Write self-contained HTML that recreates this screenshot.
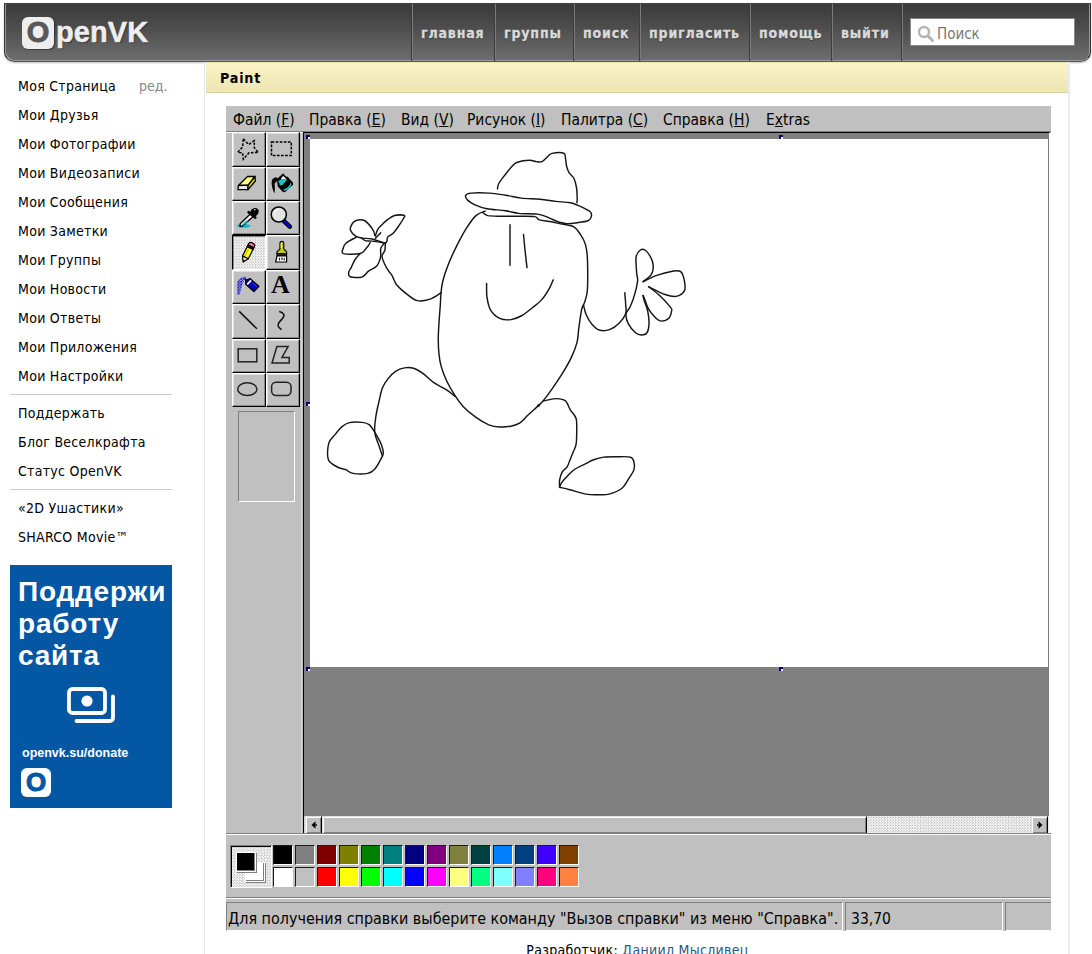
<!DOCTYPE html>
<html lang="ru"><head><meta charset="utf-8"><title>Paint</title>
<style>
*{box-sizing:border-box;margin:0;padding:0}
html,body{width:1092px;height:954px;overflow:hidden;background:#fff}
body{position:relative;font-family:"DejaVu Sans Condensed","Liberation Sans",sans-serif;font-size:14px;color:#000}
i{font-style:normal}
/* header */
#hdr{position:absolute;left:4px;top:3px;width:1087px;height:59px;border-radius:0 0 10px 10px;
 background:linear-gradient(#3a3a3a 0%,#4a4a4a 35%,#6e6e6e 100%);border:1px solid #333;border-top-color:#444;border-bottom-color:#585858;
 box-shadow:inset 1px -1px 0 #999, inset -1px 0 0 #999, 0 1px 2px rgba(0,0,0,.25)}
#logo{position:absolute;left:22px;top:17px;width:32px;height:32px;border-radius:6px;background:#eee;box-shadow:1px 1px 1px rgba(0,0,0,.4)}
#logo b{position:absolute;left:0;top:-1px;width:32px;text-align:center;font:bold 29px "Liberation Sans",sans-serif;color:#585858;-webkit-text-stroke:.9px #585858}
#logot{position:absolute;left:56px;top:16px;font:bold 29px "Liberation Sans",sans-serif;color:#eee;letter-spacing:.1px;-webkit-text-stroke:.5px #eee;text-shadow:1px 1px 1px rgba(0,0,0,.5)}
.nav{position:absolute;top:4px;height:57px;border-left:1px solid #3d3d3d;box-shadow:inset 1px 0 0 #7a7a7a;
 font:bold 14px "DejaVu Sans Condensed","Liberation Sans",sans-serif;color:#dadada;line-height:59px;-webkit-text-stroke:.3px #dadada;padding-left:9px;letter-spacing:.85px;white-space:nowrap;text-shadow:0 1px 1px rgba(0,0,0,.4)}
#search{position:absolute;left:910px;top:18px;width:165px;height:28px;background:#fff;border:1px solid #888}
#search span{position:absolute;left:26px;top:6px;font-size:15px;color:#777}
/* sidebar */
.sl{position:absolute;left:18px;font-size:14px;letter-spacing:.28px;white-space:nowrap;line-height:20px;color:#000}
.sep{position:absolute;left:10px;width:162px;height:1px;background:#ccc}
#ban{position:absolute;left:10px;top:565px;width:162px;height:243px;background:#0457a3;color:#fff}
/* content */
#cb{position:absolute;left:204px;top:62px;width:1px;height:892px;background:#dfe6ee}
#cbr{position:absolute;left:1068px;top:62px;width:2px;height:892px;background:#e6edf5}
#ybar{position:absolute;left:206px;top:62px;width:862px;height:31px;background:linear-gradient(#fbf3c4,#eee5b7);border-bottom:1px solid #dbd29f;border-top:1px solid #f0e6b4}
#ybar b{position:absolute;left:14px;top:7px;font:bold 14.2px "DejaVu Sans Condensed","Liberation Sans",sans-serif;letter-spacing:.8px}
#foot{position:absolute;left:206px;top:942px;width:863px;text-align:center;font-size:14px;letter-spacing:.3px;white-space:nowrap}
#foot a{color:#2b587a}
/* paint */
#pa{position:absolute;left:226px;top:106px;width:825px;height:825px;background:#c0c0c0;font-size:16.5px;overflow:hidden}
#pa>*{position:absolute}
.mi{top:4px;line-height:20px;white-space:nowrap;color:#000;transform:scaleX(.935);transform-origin:0 0}
.mi u{text-decoration:underline;text-underline-offset:1px}
.tb{background:#c0c0c0;border:1px solid;border-color:#fff #000 #000 #fff;box-shadow:inset -1px -1px 0 #888,inset 1px 1px 0 #dfdfdf}
.tb svg{position:absolute;left:-1px;top:-1px}
.tb.sel{border-color:#000 #fff #fff #000;box-shadow:inset 1px 1px 0 #888;background:#dfdfdf;
 background-image:repeating-conic-gradient(#fff 0 25%,#c0c0c0 0 50%);background-size:2.75px 2.75px}
.sw{position:absolute;width:20px;height:20px;border:1px solid;border-color:#1c1c1c #fff #fff #1c1c1c}
.h{position:absolute;width:4px;height:4px;background:#000080}
.h::after{content:"";position:absolute;left:2px;top:2px;width:2px;height:2px;background:#fff}
#sb{background-color:#dfdfdf;background-image:repeating-conic-gradient(#fff 0 25%,#c0c0c0 0 50%);background-size:2.75px 2.75px}
#sb>*{position:absolute;top:0;height:18px;background:#c0c0c0;border:1px solid;border-color:#dfdfdf #000 #000 #dfdfdf;box-shadow:inset 1px 1px 0 #fff,inset -1px -1px 0 #808080}
#cc{background-color:#dfdfdf;background-image:repeating-conic-gradient(#fff 0 25%,#c0c0c0 0 50%);background-size:2.75px 2.75px;border:1px solid;border-color:#808080 #fff #fff #808080;box-shadow:inset 1px 1px 0 #000}
#cc i{position:absolute;width:20px;height:20px;border:1px solid #fff;box-shadow:1px 1px 0 #808080,inset -1px -1px 0 #808080}
.st{top:796px;height:29px;line-height:26px;padding-top:3px;border:1px solid;border-color:#808080 #fff #fff #808080;white-space:nowrap;font-size:16.5px;padding-left:1px;overflow:hidden}
#bt{position:absolute;left:8px;top:11px;font:bold 28px/32px "Liberation Sans",sans-serif;letter-spacing:.8px;white-space:nowrap}
#bi{position:absolute;left:57px;top:122px}
#bu{position:absolute;left:12px;top:181px;font:bold 12.5px "Liberation Sans",sans-serif;white-space:nowrap}
#bl{position:absolute;left:11px;top:203px;width:30px;height:29px;border-radius:6px;background:#fff}
#bl b{position:absolute;left:0;top:-1px;width:30px;text-align:center;font:bold 26px "Liberation Sans",sans-serif;color:#0457a3;-webkit-text-stroke:1px #0457a3}
</style></head><body>
<div id="hdr"></div>
<div id="logo"><b>O</b></div><div id="logot">penVK</div>
<div class="nav" style="left:411px">главная</div>
<div class="nav" style="left:494px">группы</div>
<div class="nav" style="left:573px">поиск</div>
<div class="nav" style="left:639px">пригласить</div>
<div class="nav" style="left:749px">помощь</div>
<div class="nav" style="left:831px">выйти</div>
<div class="nav" style="left:901px"></div>
<div id="search"><svg width="18" height="18" viewBox="0 0 18 18" style="position:absolute;left:6px;top:6px"><circle cx="7" cy="7" r="5" fill="none" stroke="#b4b4b4" stroke-width="2.4"/><path d="M11 11L15.5 15.5" stroke="#b4b4b4" stroke-width="3" stroke-linecap="round"/></svg><span>Поиск</span></div>

<div class="sl" style="top:76px">Моя Страница</div><div class="sl" style="top:76px;left:139px;color:#888;letter-spacing:0">ред.</div>
<div class="sl" style="top:105px">Мои Друзья</div>
<div class="sl" style="top:134px">Мои Фотографии</div>
<div class="sl" style="top:163px">Мои Видеозаписи</div>
<div class="sl" style="top:192px">Мои Сообщения</div>
<div class="sl" style="top:221px">Мои Заметки</div>
<div class="sl" style="top:250px">Мои Группы</div>
<div class="sl" style="top:279px">Мои Новости</div>
<div class="sl" style="top:308px">Мои Ответы</div>
<div class="sl" style="top:337px">Мои Приложения</div>
<div class="sl" style="top:366px">Мои Настройки</div>
<div class="sep" style="top:394px"></div>
<div class="sl" style="top:403px">Поддержать</div>
<div class="sl" style="top:432px">Блог Веселкрафта</div>
<div class="sl" style="top:461px">Статус OpenVK</div>
<div class="sep" style="top:489px"></div>
<div class="sl" style="top:498px">«2D Ушастики»</div>
<div class="sl" style="top:527px">SHARCO Movie™</div>
<div id="ban">
<div id="bt">Поддержи<br>работу<br>сайта</div>
<svg id="bi" width="50" height="38" viewBox="0 0 50 38" fill="none" stroke="#fff" stroke-width="3.8"><rect x="2" y="2" width="36" height="24" rx="3.5"/><circle cx="20" cy="14" r="5.6" fill="#fff" stroke="none"/><path d="M46 9.5V30.5Q46 34 42.5 34H9.5" stroke-linecap="round"/></svg>
<div id="bu">openvk.su/donate</div>
<div id="bl"><b>O</b></div>
</div>

<div id="cb"></div><div id="cbr"></div>
<div id="ybar"><b>Paint</b></div>
<div id="foot">Разработчик: <a>Даниил Мысливец</a></div>

<div id="pa">
<!-- menu bar -->
<div class="mi" style="left:7px">Файл (<u>F</u>)</div>
<div class="mi" style="left:83px">Правка (<u>E</u>)</div>
<div class="mi" style="left:175px">Вид (<u>V</u>)</div>
<div class="mi" style="left:241px">Рисунок (<u>I</u>)</div>
<div class="mi" style="left:335px">Палитра (<u>C</u>)</div>
<div class="mi" style="left:437px">Справка (<u>H</u>)</div>
<div class="mi" style="left:540px">E<u>x</u>tras</div>
<div style="left:0;top:25px;width:825px;height:1px;background:#808080"></div>
<div style="left:0;top:26px;width:77px;height:1px;background:#fff"></div>
<!-- tools -->
<div class="tb" style="left:6px;top:26px;width:34px;height:35px"><svg width="34" height="34" viewBox="0 0 34 34"><polygon points="11.3,6.8 16.6,12.5 22.3,8.7 22.3,15.8 26.4,20.4 17,20.8 11.3,27.2 10.6,20.8 5.7,20.4 10.6,15.1" fill="none" stroke="#000" stroke-width="1.5" stroke-dasharray="2.6 1.5"/></svg></div>
<div class="tb" style="left:40px;top:26px;width:34px;height:35px"><svg width="34" height="34" viewBox="0 0 34 34"><rect x="5.5" y="10" width="19.8" height="13.6" fill="none" stroke="#000" stroke-width="1.5" stroke-dasharray="2.7 1.4"/></svg></div>
<div class="tb" style="left:6px;top:61px;width:34px;height:34px"><svg width="34" height="34" viewBox="0 0 34 34"><g transform="translate(0 .8)"><polygon points="15.5,8.7 23,8.7 16.2,17.4 6.4,17.7" fill="#ffff80" stroke="#000" stroke-width="1.3" stroke-linejoin="round"/><polygon points="6.4,17.7 16.2,17.4 15.8,21.9 6,21.9" fill="#e8e8e8" stroke="#000" stroke-width="1.3" stroke-linejoin="round"/><polygon points="23,8.7 23.4,13.2 15.8,21.9 16.2,17.4" fill="#d8d800" stroke="#000" stroke-width="1.3" stroke-linejoin="round"/></g></svg></div>
<div class="tb" style="left:40px;top:61px;width:34px;height:34px"><svg width="34" height="34" viewBox="0 0 34 34"><path d="M10.4 10.2C7.4 10.6 5.6 12.4 5.6 15.4C5.6 19.6 7 23.6 8.6 26.4C8.9 23 8.9 20 8.7 16.4L12.2 12.4Z" fill="#000"/><path d="M17.1 7.1L19.2 9.8L21.4 10.3L26.5 16.2Q26.9 17 26.2 17.8L19 24.2Q17.8 25 16.8 24L12.3 19.2L11.5 12.2Z" fill="#000" stroke="#000" stroke-width="1.2" stroke-linejoin="round"/><polygon points="12,14.3 15.7,12.1 21,12.8 16.7,17.8 13.9,18.5 13.2,15.7" fill="#18c4c8"/><path d="M17.2 22.4Q23 21 24.7 15.4L25.5 17.4Q23.5 22.5 18.4 23.8Z" fill="#18c4c8"/><polygon points="17.1,9 20.9,12.4 14.8,11.9" fill="#fff"/></svg></div>
<div class="tb" style="left:6px;top:95px;width:34px;height:34px"><svg width="34" height="34" viewBox="0 0 34 34"><ellipse cx="11.7" cy="24.8" rx="6.8" ry="1.9" fill="#10b8c0"/><polygon points="18.3,13 21,15.7 10.4,25 8,25.4 8.2,22.8" fill="#fff" stroke="#000" stroke-width="1.3" stroke-linejoin="round"/><polygon points="14.2,19.6 16,21 10.6,24.4 9.4,24.3" fill="#10b8c0"/><path d="M16.6 11.2L23.2 16.6" stroke="#000" stroke-width="2.6" stroke-linecap="round"/><ellipse cx="22.4" cy="11.2" rx="4.7" ry="3.9" transform="rotate(-45 22.4 11.2)" fill="#000"/><circle cx="22.8" cy="8.8" r=".8" fill="#fff"/></svg></div>
<div class="tb" style="left:40px;top:95px;width:34px;height:34px"><svg width="34" height="34" viewBox="0 0 34 34"><path d="M17.7 19.9L23.8 25.6" stroke="#000" stroke-width="4.6" stroke-linecap="round"/><path d="M18.4 20.6L23.6 25.4" stroke="#0000c8" stroke-width="2.6" stroke-linecap="round"/><circle cx="12.8" cy="13.5" r="7.6" fill="#e4e4e4" stroke="#000" stroke-width="1.5"/><path d="M8.4 11.6A5 5 0 0 1 12 8.2" fill="none" stroke="#fff" stroke-width="1.4"/></svg></div>
<div class="tb sel" style="left:6px;top:129px;width:34px;height:35px"><svg width="34" height="34" viewBox="0 0 34 34" style="left:-2px;top:-1px"><g transform="translate(21.3 8.6) rotate(26.5)"><path d="M-3.2 1.5C-3.2 -1.4 3.2 -1.4 3.2 1.5L3.2 3L-3.2 3Z" fill="#ff70b0" stroke="#000" stroke-width="1.2"/><rect x="-3.2" y="3" width="6.4" height="2" fill="#222" stroke="#000" stroke-width="1"/><rect x="-3.2" y="5" width="6.4" height="10.4" fill="#ffff20" stroke="#000" stroke-width="1.2"/><path d="M-1 5.4V15" stroke="#c8c800" stroke-width="1.2"/><polygon points="-3.2,15.4 3.2,15.4 0,20.6" fill="#ffe8a0" stroke="#000" stroke-width="1.2" stroke-linejoin="round"/><polygon points="-1.2,18.6 1.2,18.6 0,20.8" fill="#000"/></g></svg></div>
<div class="tb" style="left:40px;top:129px;width:34px;height:35px"><svg width="34" height="34" viewBox="0 0 34 34"><path d="M14 8.4C14 5.8 17.7 5.8 17.7 8.4L17.7 13.6C17.7 15 20.6 15.4 20.6 17.2L20.6 18.8L11 18.8L11 17.2C11 15.4 14 15 14 13.6Z" fill="#c8c818" stroke="#000" stroke-width="1.2"/><path d="M15.2 8V13" stroke="#ffff60" stroke-width="1.1"/><rect x="11" y="18.8" width="9.6" height="2.2" fill="#333" stroke="#000" stroke-width="1"/><polygon points="11,21 20.6,21 20.6,27 9.6,27" fill="#fff" stroke="#000" stroke-width="1.2" stroke-linejoin="round"/><path d="M13.6 22.8V25.4M16 22.4V25M18.2 22.8V25.4" stroke="#000" stroke-width="1"/></svg></div>
<div class="tb" style="left:6px;top:164px;width:34px;height:34px"><svg width="34" height="34" viewBox="0 0 34 34"><defs><pattern id="spr" width="2.75" height="2.75" patternUnits="userSpaceOnUse"><rect x="0" y="0" width="1.7" height="1.7" fill="#1010e0"/><rect x="1.375" y="1.375" width="1.7" height="1.7" fill="#2020e8"/></pattern></defs><path d="M13.4 6.6L14.2 8.2C11.8 10 10.8 13 9.6 17L7.6 24.8L5.2 24.8L5.2 12.4C6 9.6 9.4 7.2 13.4 6.6Z" fill="url(#spr)"/><polygon points="17.9,8.6 26.8,16.2 21.9,21.6 13.8,14.2 13.6,10.6" fill="#0000c0" stroke="#000" stroke-width="1.4" stroke-linejoin="round"/><polygon points="14.6,13.8 18.4,9.8 19.8,11 15.8,15" fill="#fff"/><polygon points="12.6,8 15.6,9.6 13.4,11.6" fill="#000"/><path d="M20.4 12.6L25.2 16.8" stroke="#4040ff" stroke-width="1"/></svg></div>
<div class="tb" style="left:40px;top:164px;width:34px;height:34px"><svg width="34" height="34" viewBox="0 0 34 34"><text x="14.4" y="23.4" text-anchor="middle" font-family="Liberation Serif, serif" font-weight="bold" font-size="26" fill="#000">A</text></svg></div>
<div class="tb" style="left:6px;top:198px;width:34px;height:35px"><svg width="34" height="34" viewBox="0 0 34 34"><path d="M7.2 7.4L24.9 24.8" stroke="#111" stroke-width="1.5"/></svg></div>
<div class="tb" style="left:40px;top:198px;width:34px;height:35px"><svg width="34" height="34" viewBox="0 0 34 34"><path d="M13.2 7.4C18 8.6 19.4 11.4 16.4 14.6C12.4 18.6 9.6 22 15.5 25.5" fill="none" stroke="#111" stroke-width="1.5"/></svg></div>
<div class="tb" style="left:6px;top:233px;width:34px;height:34px"><svg width="34" height="34" viewBox="0 0 34 34"><rect x="6.2" y="9.8" width="18.6" height="13" fill="none" stroke="#222" stroke-width="1.5"/></svg></div>
<div class="tb" style="left:40px;top:233px;width:34px;height:34px"><svg width="34" height="34" viewBox="0 0 34 34"><polygon points="10.9,7.6 22.1,7.6 16,18.5 23.2,18.5 23.2,24 6,24" fill="none" stroke="#222" stroke-width="1.5"/></svg></div>
<div class="tb" style="left:6px;top:267px;width:34px;height:34px"><svg width="34" height="34" viewBox="0 0 34 34"><ellipse cx="15.3" cy="16.2" rx="9.6" ry="6.4" fill="none" stroke="#222" stroke-width="1.5"/></svg></div>
<div class="tb" style="left:40px;top:267px;width:34px;height:34px"><svg width="34" height="34" viewBox="0 0 34 34"><rect x="5.6" y="9.2" width="19.4" height="13.2" rx="4.4" fill="none" stroke="#222" stroke-width="1.5"/></svg></div>

<div style="left:12px;top:305px;width:57px;height:91px;border:1px solid;border-color:#808080 #fff #fff #808080"></div>
<div style="left:75px;top:27px;width:1px;height:700px;background:#d4d4d4"></div>
<!-- canvas area -->
<div id="ca" style="left:77px;top:26px;width:748px;height:702px;background:#808080;border:1px solid #000;border-right:2px solid #fff;border-bottom:0;overflow:hidden">
 <i class="h" style="left:2px;top:2px"></i><i class="h" style="left:475px;top:2px"></i>
 <i class="h" style="left:2px;top:269px"></i>
 <i class="h" style="left:2px;top:534px"></i><i class="h" style="left:475px;top:534px"></i>
 <svg style="position:absolute;left:6px;top:6px;background:#fff" width="738" height="528" viewBox="0 0 738 528" fill="none" stroke="#151515" stroke-width="1.45" stroke-linecap="round" stroke-linejoin="round"><path d="M175.1 72.1C173.6 72.8 169.1 73.8 166.0 76.6C162.9 79.3 159.9 83.8 156.8 88.6C153.7 93.3 150.7 99.0 147.6 105.1C144.5 111.2 140.8 119.2 138.4 125.3C135.9 131.4 134.1 137.2 132.9 141.8C131.7 146.4 131.6 148.7 131.1 153.0C130.7 157.3 130.5 163.1 130.2 167.5C129.9 171.9 129.6 174.3 129.3 179.3C129.0 184.3 128.4 191.9 128.3 197.7C128.2 203.5 128.4 209.3 128.9 214.2C129.4 219.1 129.8 222.5 131.1 227.1C132.4 231.7 134.3 236.8 136.6 241.7C138.9 246.6 142.1 252.1 144.9 256.4C147.6 260.7 149.6 263.7 153.1 267.4C156.6 271.1 161.7 275.3 166.0 278.4C170.3 281.5 174.8 284.2 178.8 285.8C182.8 287.4 186.1 287.8 189.8 288.0C193.5 288.2 197.4 287.9 200.8 287.2C204.2 286.5 207.2 285.7 210.0 283.9C212.8 282.1 214.6 279.4 217.5 276.6C220.4 273.9 225.0 269.8 227.6 267.4C230.2 264.9 230.8 264.6 233.1 261.9C235.4 259.1 238.2 255.5 241.4 250.9C244.6 246.3 249.0 239.9 252.4 234.4C255.8 228.9 259.2 223.1 261.6 217.9C264.1 212.7 265.9 208.1 267.1 203.2C268.3 198.3 268.1 194.0 268.9 188.5C269.7 183.0 270.8 174.3 271.7 170.2C272.6 166.1 273.5 166.7 274.4 163.8C275.3 160.9 276.7 157.7 277.2 152.8C277.8 147.9 277.7 140.5 277.7 134.4C277.7 128.3 277.6 121.0 277.2 116.1C276.8 111.2 276.4 108.5 275.3 105.1C274.2 101.7 272.7 98.8 270.7 95.9C268.7 93.0 266.8 89.5 263.4 87.7C260.0 85.9 254.3 85.7 250.6 84.9C246.9 84.1 244.9 83.4 241.4 82.7C237.9 82.0 232.1 81.8 229.4 80.9C226.6 80.1 228.4 78.2 224.9 77.6C221.4 77.0 214.1 77.3 208.3 77.2C202.5 77.1 195.1 77.3 190.0 77.2C184.9 77.1 180.7 77.1 177.9 76.6C175.1 76.0 174.1 74.4 173.3 73.9"/><path d="M155.6 56.5C156.2 55.3 156.9 54.5 160.9 54.1C164.9 53.7 173.7 53.7 179.5 54.1C185.3 54.4 190.2 55.4 195.5 56.2C200.8 57.0 205.6 58.4 211.4 59.1C217.1 59.8 224.2 59.6 230.0 60.2C235.8 60.7 240.8 61.8 245.9 62.4C251.0 63.0 256.1 62.8 260.5 63.8C264.9 64.8 269.2 66.9 272.5 68.4C275.8 70.0 279.1 71.4 280.5 73.1C281.9 74.8 281.6 77.0 281.1 78.4C280.7 79.8 280.1 80.8 277.8 81.7C275.5 82.6 270.7 83.2 267.2 83.7C263.7 84.2 259.7 84.7 256.6 84.6C253.5 84.5 251.7 84.0 248.6 83.0C245.5 82.0 241.6 79.7 238.0 78.4C234.4 77.1 232.2 75.8 227.3 75.1C222.4 74.4 214.0 75.0 208.7 74.4C203.4 73.8 200.8 72.5 195.5 71.7C190.2 70.9 182.0 70.7 176.9 69.7C171.8 68.7 168.1 67.2 164.9 65.8C161.7 64.4 159.2 62.6 157.6 61.1C156.1 59.5 155.1 57.7 155.6 56.5Z"/><path d="M187.5 49.8C187.7 48.9 187.5 46.9 188.8 44.5C190.1 42.1 193.3 38.1 195.5 35.2C197.7 32.3 200.1 29.2 202.1 27.2C204.1 25.2 204.5 24.3 207.4 23.3C210.3 22.3 216.3 21.4 219.4 21.3C222.5 21.2 223.9 22.4 226.0 22.6C228.1 22.8 230.0 23.5 232.0 22.6C234.0 21.7 236.3 18.7 238.0 17.3C239.7 15.9 239.4 14.9 242.0 14.4C244.6 13.9 251.5 13.4 253.7 14.2C256.0 15.0 255.0 17.1 255.5 19.3C256.0 21.5 256.0 24.8 256.6 27.2C257.2 29.6 258.0 31.9 259.2 33.9C260.4 35.9 262.7 36.8 263.9 39.2C265.1 41.6 265.9 45.2 266.5 48.5C267.1 51.8 267.1 56.5 267.2 59.1C267.3 61.6 266.9 63.0 266.9 63.8"/><path d="M200.0 85.8C200.0 92.5 200.0 119.5 200.0 126.2"/><path d="M213.5 95.5C213.8 98.1 214.4 105.5 215.0 111.0C215.6 116.5 216.7 125.7 217.0 128.6"/><path d="M176.6 144.5C176.7 146.8 176.3 153.9 177.0 158.3C177.7 162.7 178.5 167.6 180.6 171.1C182.7 174.6 186.4 177.8 189.8 179.4C193.2 181.0 197.3 181.1 201.0 180.6C204.7 180.1 208.3 178.6 212.0 176.5C215.7 174.4 219.6 171.0 223.0 168.3C226.4 165.6 229.5 163.3 232.2 160.1C235.0 156.9 237.7 152.3 239.5 149.1C241.3 145.9 242.6 142.3 243.2 140.9"/><path d="M131.1 153.7C129.3 154.8 124.1 158.8 120.1 160.1C116.1 161.4 111.2 162.5 107.2 161.6C103.2 160.7 99.6 157.3 96.2 154.6C92.8 152.0 89.0 148.7 86.6 145.7C84.2 142.7 83.3 138.6 82.0 136.4C80.7 134.1 79.9 134.1 78.7 132.2C77.4 130.2 75.6 127.2 74.5 124.7C73.4 122.2 71.9 119.4 72.0 117.2C72.1 115.0 74.3 113.3 74.9 111.3C75.4 109.3 75.2 106.4 75.3 105.4"/><path d="M65.3 97.0C65.7 95.9 66.7 92.2 67.8 90.3C68.9 88.4 70.5 87.2 72.0 85.7C73.5 84.2 74.9 82.6 77.0 81.1C79.1 79.6 81.6 77.3 84.5 76.5C87.4 75.7 92.7 75.8 94.2 76.3C95.7 76.9 94.2 78.0 93.3 79.8C92.4 81.6 90.4 84.5 88.7 87.0C87.0 89.5 84.7 92.7 82.9 94.5C81.1 96.3 78.8 96.6 77.8 97.9C76.8 99.2 77.4 101.0 77.0 102.1C76.6 103.2 75.6 104.2 75.3 104.6"/><path d="M64.8 96.2C64.5 95.2 64.4 92.8 62.7 90.3C61.0 87.9 57.2 83.0 54.4 81.5C51.6 80.0 48.1 80.9 46.0 81.5C43.9 82.1 42.7 83.7 41.8 85.3C40.9 86.9 39.8 89.2 40.5 91.2C41.2 93.2 44.0 96.1 46.0 97.4C48.0 98.7 50.0 98.7 52.7 99.1C55.3 99.5 58.1 99.2 61.9 100.0C65.7 100.8 73.1 103.5 75.3 104.2"/><path d="M46.0 98.3C44.3 99.3 38.0 102.4 35.9 104.2C33.8 105.9 33.8 107.1 33.4 108.8C33.0 110.5 30.6 113.6 33.4 114.6C36.2 115.5 46.4 115.3 50.2 114.5C54.0 113.7 54.3 111.4 56.0 109.6C57.7 107.8 59.5 104.7 60.2 103.7"/><path d="M50.2 114.5C49.3 115.5 46.6 118.2 45.1 120.5C43.6 122.8 42.4 126.0 41.4 128.1C40.3 130.2 39.0 131.5 38.8 133.1C38.6 134.7 37.9 136.9 40.1 137.7C42.3 138.5 48.7 139.0 51.8 138.1C54.9 137.2 56.1 133.9 58.5 132.2C60.9 130.4 64.4 129.1 66.1 127.6C67.9 126.1 68.2 124.7 69.0 123.0C69.8 121.3 70.4 119.4 70.7 117.2C71.0 115.0 70.2 111.6 70.7 109.6C71.2 107.6 73.1 105.8 73.6 105.0"/><path d="M51.0 98.7C51.7 99.2 53.4 101.0 55.2 101.6C57.0 102.2 58.5 101.7 61.9 102.1C65.2 102.5 73.1 103.8 75.3 104.2"/><path d="M65.3 99.5C66.2 98.5 69.8 94.7 70.7 93.7"/><path d="M273.5 166.0C273.9 167.6 274.8 172.5 276.2 175.7C277.6 178.8 279.4 182.3 281.7 184.9C284.0 187.5 286.9 190.4 290.0 191.3C293.1 192.2 296.9 191.6 300.1 190.4C303.3 189.2 306.7 186.5 309.3 183.9C311.9 181.3 314.6 177.8 315.7 174.8C316.8 171.8 315.9 169.5 315.7 166.0C315.6 162.5 314.9 155.8 314.8 153.7"/><path d="M333.1 142.7C334.5 141.5 339.7 138.1 341.4 135.4C343.1 132.6 343.4 129.1 343.2 126.2C343.1 123.3 341.9 120.4 340.5 117.9C339.1 115.4 336.7 112.1 335.0 111.0C333.3 109.9 331.9 109.9 330.4 111.0C328.9 112.1 326.7 114.0 326.1 117.9C325.5 121.8 326.5 130.4 326.7 134.4C327.0 138.4 327.9 138.4 327.6 141.8C327.3 145.2 326.1 150.3 324.9 154.6C323.7 158.9 321.8 164.1 320.3 167.5C318.8 170.9 316.3 172.1 316.0 175.0C315.7 177.9 316.8 181.7 318.4 184.9C320.0 188.1 323.6 192.2 325.8 194.0C327.9 195.8 329.5 195.9 331.3 195.9C333.1 195.9 335.5 195.8 336.8 194.0C338.1 192.2 338.8 188.6 339.0 184.9C339.2 181.2 338.5 176.0 337.7 172.0C336.9 168.0 334.8 163.6 334.0 161.0C333.2 158.4 333.2 157.2 333.1 156.5"/><path d="M333.1 142.7C335.2 141.7 341.1 138.4 346.0 136.6C350.9 134.9 358.4 132.9 362.5 132.2C366.6 131.5 368.7 131.0 370.7 132.6C372.7 134.2 373.8 138.6 374.4 141.8C375.0 145.0 375.8 149.3 374.4 151.9C373.0 154.5 369.3 156.8 366.1 157.4C362.9 158.0 359.7 157.1 355.1 155.5C350.5 153.9 341.4 149.0 338.6 147.7"/><path d="M338.6 147.7C340.4 149.2 345.9 153.1 349.6 156.5C353.3 159.9 358.6 165.8 360.6 168.4C362.6 171.0 361.9 170.2 361.6 172.0C361.3 173.8 360.5 177.6 358.8 179.3C357.1 181.0 353.6 182.1 351.5 182.1C349.4 182.1 348.1 181.3 346.0 179.3C343.9 177.3 340.4 173.2 338.6 170.2C336.8 167.1 335.9 163.3 335.0 161.0C334.1 158.7 333.4 157.2 333.1 156.5"/><path d="M144.9 257.3C143.5 256.2 140.1 253.2 136.6 250.9C133.1 248.6 127.8 246.4 123.8 243.6C119.8 240.9 116.2 236.8 112.8 234.4C109.4 232.0 106.7 230.2 103.6 229.3C100.5 228.4 97.5 228.3 94.4 228.9C91.3 229.4 87.9 230.8 85.2 232.6C82.4 234.4 80.0 237.1 77.9 239.9C75.8 242.6 73.9 245.1 72.4 249.1C70.9 253.1 69.8 259.2 68.7 263.8C67.6 268.4 66.7 271.7 66.0 276.6C65.3 281.5 64.2 288.2 64.7 293.1C65.1 298.0 67.4 301.9 68.7 305.9C70.0 309.9 71.8 315.1 72.4 317.0"/><path d="M64.7 293.1C63.5 291.3 61.6 287.4 59.5 285.8C57.4 284.2 55.5 283.8 52.2 283.4C48.8 283.0 42.8 282.9 39.4 283.6C36.0 284.3 34.3 285.7 32.0 287.6C29.7 289.5 27.8 292.1 25.6 294.9C23.4 297.6 20.0 299.8 18.8 304.1C17.6 308.4 16.9 316.6 18.3 320.6C19.7 324.6 24.5 326.3 27.4 328.0C30.3 329.7 33.1 329.6 35.7 330.7C38.3 331.8 39.3 333.8 43.0 334.4C46.7 335.0 54.0 335.2 57.7 334.4C61.4 333.6 62.8 332.1 65.0 329.8C67.2 327.5 69.2 323.2 70.6 320.6C72.0 318.0 73.2 316.6 73.3 314.2C73.5 311.8 72.6 308.8 71.5 305.9C70.4 303.0 68.0 298.9 66.9 296.8C65.8 294.7 65.9 294.9 64.7 293.1Z"/><path d="M233.1 262.1C234.8 261.7 240.5 260.3 243.2 259.9C246.0 259.5 247.5 259.5 249.6 259.9C251.7 260.3 253.9 260.2 255.7 262.1C257.5 264.0 258.9 268.4 260.6 271.3C262.3 274.2 265.1 276.0 266.1 279.5C267.1 283.0 266.7 288.1 266.7 292.4C266.7 296.7 266.7 301.8 266.1 305.2C265.6 308.6 264.5 309.9 263.4 312.6C262.3 315.4 260.8 319.1 259.7 321.7C258.6 324.3 258.2 326.4 257.0 328.2C255.8 330.0 253.6 330.6 252.4 332.7C251.2 334.8 250.1 338.4 249.6 341.0C249.1 343.6 249.6 347.1 249.6 348.3"/><path d="M249.6 348.3C251.3 348.7 255.3 349.6 259.7 350.7C264.1 351.8 271.6 354.3 276.2 355.1C280.8 355.9 283.4 355.7 287.2 355.7C291.0 355.7 295.1 356.2 299.2 355.1C303.3 354.0 308.8 351.8 312.0 349.3C315.2 346.8 316.4 343.2 318.4 340.1C320.4 337.0 323.0 333.8 323.9 330.9C324.8 328.0 324.5 324.8 323.9 322.7C323.3 320.6 323.0 318.9 320.3 318.1C317.5 317.3 311.8 317.7 307.4 317.7C303.0 317.7 297.7 317.6 293.7 318.1C289.7 318.6 286.8 319.6 283.6 320.8C280.4 322.0 277.5 323.9 274.4 325.4C271.3 326.9 268.0 328.2 265.2 330.0C262.5 331.8 260.2 334.1 257.9 336.4C255.6 338.7 252.9 341.8 251.5 343.8C250.1 345.8 249.9 347.6 249.6 348.3"/><circle cx="228.5" cy="266.5" r="1.3" fill="#000" stroke="none"/></svg>
 <!-- scrollbar -->
 <div id="sb" style="position:absolute;left:0;top:683px;width:745px;height:18px"><b style="left:1px;width:17px"></b><b style="left:18px;width:545px"></b><b style="left:727px;width:17px"></b><svg style="left:0;top:0;position:absolute;background:none;border:0;box-shadow:none" width="745" height="18"><polygon points="7.5,9 11.5,5.2 11.5,12.8" fill="#000"/><rect x="11.5" y="8.2" width="1.4" height="1.6" fill="#000"/><polygon points="738.5,9 734.5,5.2 734.5,12.8" fill="#000"/><rect x="733" y="8.2" width="1.5" height="1.6" fill="#000"/></svg></div>
</div>
<div style="left:0;top:727px;width:825px;height:1px;background:#808080"></div>
<div style="left:0;top:728px;width:825px;height:1px;background:#fff"></div>
<!-- colour box -->
<div id="cc" style="left:4px;top:739px;width:42px;height:43px"><i style="left:14px;top:16px;background:#fff"></i><i style="left:5px;top:6px;background:#000"></i></div>
<i class="sw" style="left:47px;top:739px;background:#000000"></i><i class="sw" style="left:69px;top:739px;background:#808080"></i><i class="sw" style="left:91px;top:739px;background:#800000"></i><i class="sw" style="left:113px;top:739px;background:#808000"></i><i class="sw" style="left:135px;top:739px;background:#008000"></i><i class="sw" style="left:157px;top:739px;background:#008080"></i><i class="sw" style="left:179px;top:739px;background:#000080"></i><i class="sw" style="left:201px;top:739px;background:#800080"></i><i class="sw" style="left:223px;top:739px;background:#808040"></i><i class="sw" style="left:245px;top:739px;background:#004040"></i><i class="sw" style="left:267px;top:739px;background:#0080ff"></i><i class="sw" style="left:289px;top:739px;background:#004080"></i><i class="sw" style="left:311px;top:739px;background:#4000ff"></i><i class="sw" style="left:333px;top:739px;background:#804000"></i>
<i class="sw" style="left:47px;top:761px;background:#ffffff"></i><i class="sw" style="left:69px;top:761px;background:#c0c0c0"></i><i class="sw" style="left:91px;top:761px;background:#ff0000"></i><i class="sw" style="left:113px;top:761px;background:#ffff00"></i><i class="sw" style="left:135px;top:761px;background:#00ff00"></i><i class="sw" style="left:157px;top:761px;background:#00ffff"></i><i class="sw" style="left:179px;top:761px;background:#0000ff"></i><i class="sw" style="left:201px;top:761px;background:#ff00ff"></i><i class="sw" style="left:223px;top:761px;background:#ffff80"></i><i class="sw" style="left:245px;top:761px;background:#00ff80"></i><i class="sw" style="left:267px;top:761px;background:#80ffff"></i><i class="sw" style="left:289px;top:761px;background:#8080ff"></i><i class="sw" style="left:311px;top:761px;background:#ff0080"></i><i class="sw" style="left:333px;top:761px;background:#ff8040"></i>

<div style="left:0;top:791px;width:825px;height:1px;background:#808080"></div>
<div style="left:0;top:792px;width:825px;height:1px;background:#fff"></div>
<!-- status -->
<div class="st" style="left:0;width:617px"><span style="display:inline-block;transform:scaleX(.967);transform-origin:0 0">Для получения справки выберите команду "Вызов справки" из меню "Справка".</span></div>
<div class="st" style="left:619px;width:158px;padding-left:5px"><span style="display:inline-block;transform:scaleX(.94);transform-origin:0 0">33,70</span></div>
<div class="st" style="left:779px;width:60px"></div>
</div>
</body></html>
